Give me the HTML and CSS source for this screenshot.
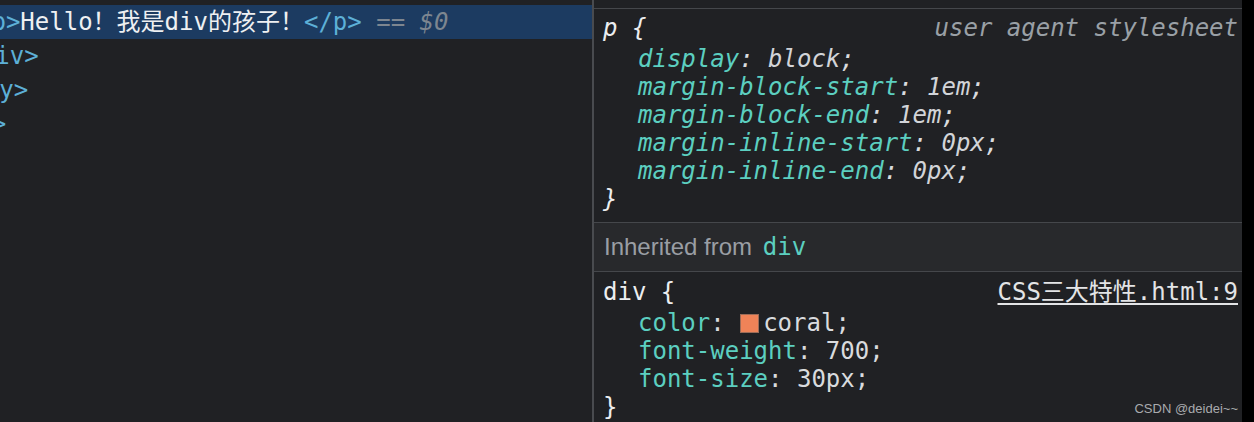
FILE: index.html
```html
<!DOCTYPE html>
<html lang="zh-CN">

<head>
    <meta charset="UTF-8">
    <meta name="viewport" content="width=device-width, initial-scale=1.0">
    <title>DevTools</title>
    <link rel="stylesheet" href="styles.css">
</head>

<body>
    <div class="devtools">
        <!-- Elements 面板 -->
        <div class="elements">
            <div class="tree">
                <div class="node selected l3"><span class="tag">&lt;p&gt;</span>Hello！我是div的孩子！<span class="tag">&lt;/p&gt;</span> <span class="ref">== <i>$0</i></span></div>
                <div class="node l2"><span class="tag">&lt;/div&gt;</span></div>
                <div class="node l1"><span class="tag">&lt;/body&gt;</span></div>
                <div class="node l0"><span class="tag">&lt;/html&gt;</span></div>
            </div>
        </div>

        <!-- Styles 面板 -->
        <div class="styles">
            <div class="rule ua">
                <div class="rule-head">
                    <span class="selector">p {</span>
                    <span class="origin">user agent stylesheet</span>
                </div>
                <div class="decl"><span class="prop">display</span>: <span class="val">block</span>;</div>
                <div class="decl"><span class="prop">margin-block-start</span>: <span class="val">1em</span>;</div>
                <div class="decl"><span class="prop">margin-block-end</span>: <span class="val">1em</span>;</div>
                <div class="decl"><span class="prop">margin-inline-start</span>: <span class="val">0px</span>;</div>
                <div class="decl"><span class="prop">margin-inline-end</span>: <span class="val">0px</span>;</div>
                <div class="selector">}</div>
            </div>

            <div class="inherited">Inherited from <span class="from">div</span></div>

            <div class="rule">
                <div class="rule-head">
                    <span class="selector">div {</span>
                    <a class="link">CSS三大特性.html:9</a>
                </div>
                <div class="decl"><span class="prop">color</span>: <span class="swatch"></span>coral;</div>
                <div class="decl"><span class="prop">font-weight</span>: 700;</div>
                <div class="decl"><span class="prop">font-size</span>: 30px;</div>
                <div class="selector">}</div>
            </div>

            <div class="watermark">CSDN @deidei~~</div>
        </div>

        <div class="edge"></div>
    </div>
</body>

</html>
```

FILE: styles.css
```css
body {
    margin: 0;
    height: 422px;
    overflow: hidden;
    background-color: #202124;
    font-family: "DejaVu Sans Mono", "Noto Sans CJK SC", monospace;
    font-size: 24px;
    color: #e3e4e6;
}

.devtools {
    display: flex;
    height: 422px;
}

/* 左邊 elements tree */
.elements {
    width: 592px;
    flex-shrink: 0;
    overflow: hidden;
    border-right: 2px solid #494b4f;
}

.tree {
    margin-left: -96px;
    padding-top: 5px;
}

.node {
    height: 34px;
    line-height: 34px;
    white-space: nowrap;
}

.l0 { padding-left: 1px; }
.l1 { padding-left: 23px; }
.l2 { padding-left: 48px; }
.l3 { padding-left: 73px; }

.selected {
    background-color: #1c3b61;
    color: #eef0f2;
}

.tag {
    color: #5db0d7;
}

.ref {
    color: #7d8690;
}

/* 右邊 styles */
.styles {
    position: relative;
    width: 648px;
    flex-shrink: 0;
    border-top: 1px solid #45474b;
    margin-top: 8px;
}

.rule {
    padding: 6px 4px 0 9px;
    line-height: 28px;
}

.rule.ua {
    padding-top: 5px;
    padding-bottom: 9px;
    font-style: italic;
}

.rule-head {
    display: flex;
    justify-content: space-between;
    margin-bottom: 3px;
}

.selector {
    color: #eceef0;
}

.origin {
    color: #9aa0a6;
}

.link {
    color: #e3e4e6;
    text-decoration: underline;
    text-underline-offset: 3px;
}

.decl {
    padding-left: 35px;
    color: #d9dbde;
    white-space: nowrap;
}

.prop {
    color: #5ccfc0;
}

.ua .val {
    color: #d2d4d8;
}

.swatch {
    display: inline-block;
    width: 17px;
    height: 17px;
    margin: 0 4px 0 1px;
    vertical-align: -2px;
    background-color: #ef8358;
    border: 1px solid #9c6c58;
}

.inherited {
    height: 48px;
    line-height: 48px;
    padding-left: 10px;
    background-color: #28292c;
    border-top: 1px solid #45474b;
    border-bottom: 1px solid #45474b;
    font-family: "Liberation Sans", "Noto Sans", sans-serif;
    color: #9a9ea4;
}

.from {
    margin-left: 4px;
    font-family: "DejaVu Sans Mono", monospace;
    color: #5ccfc0;
}

.watermark {
    position: absolute;
    right: 4px;
    bottom: 6px;
    font-family: "Liberation Sans", sans-serif;
    font-size: 13px;
    color: #a9abae;
}

.edge {
    flex: 1;
    background-color: #000;
}
```
